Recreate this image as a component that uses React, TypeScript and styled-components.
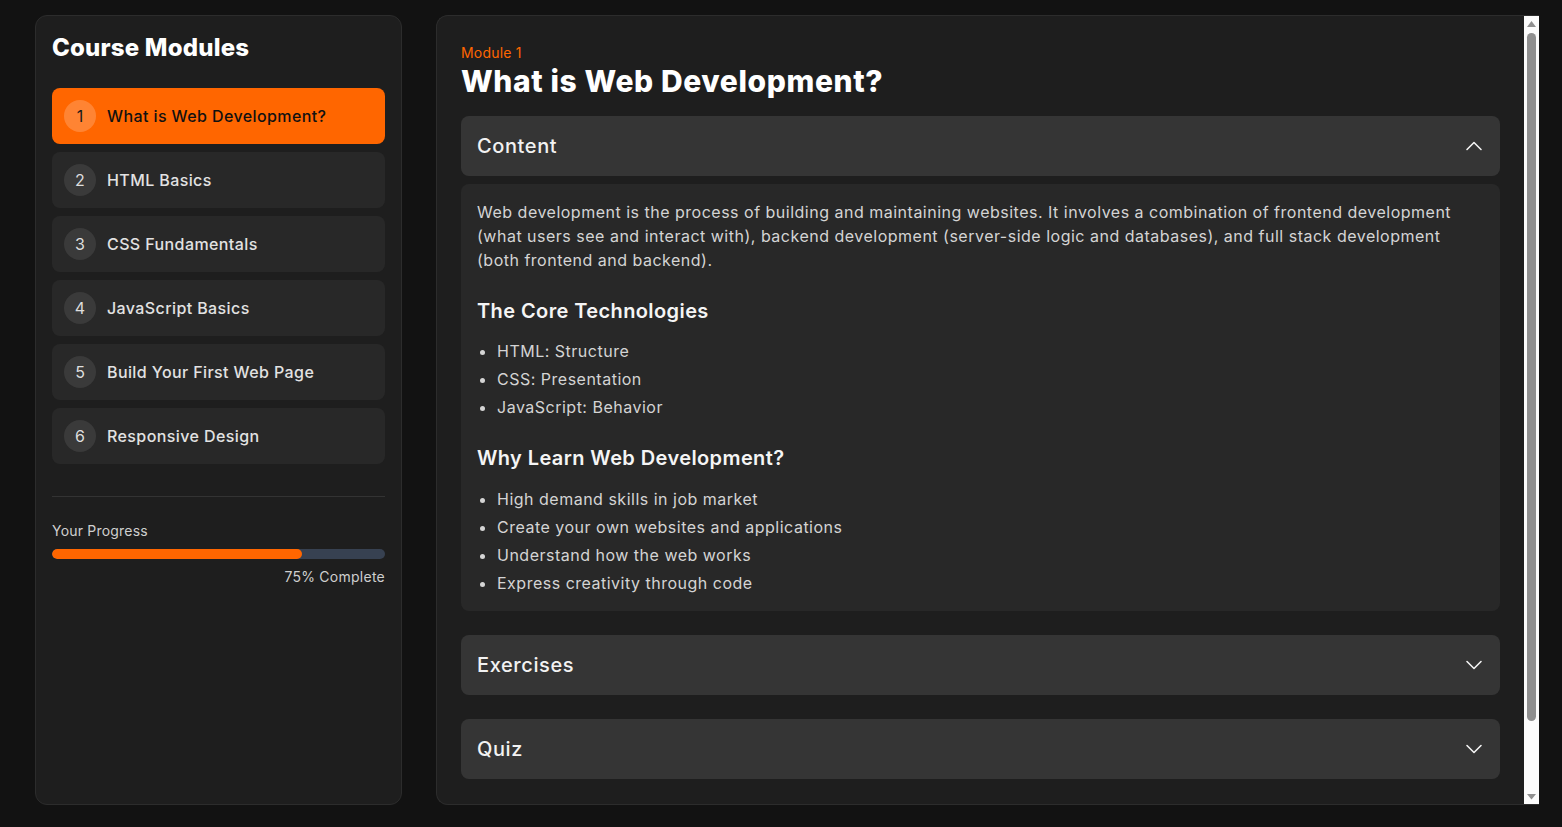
import React, { useState } from 'react'
import styled, { createGlobalStyle } from 'styled-components'

const GlobalStyle = createGlobalStyle`
  * { box-sizing: border-box; }
  html, body {
    margin: 0;
    padding: 0;
    background: #121212;
    font-family: Inter, "Noto Sans", sans-serif;
    color: #e5e5e5;
  }
`

const modules = [
  'What is Web Development?',
  'HTML Basics',
  'CSS Fundamentals',
  'JavaScript Basics',
  'Build Your First Web Page',
  'Responsive Design',
]

const Chevron = ({ up }: { up?: boolean }) => (
  <svg width="24" height="24" viewBox="0 0 24 24" fill="none" stroke="currentColor" strokeWidth="1.6" strokeLinecap="round" strokeLinejoin="round">
    {up ? <path d="M5 15.5l7-7 7 7" /> : <path d="M19 8.5l-7 7-7-7" />}
  </svg>
)

const Arrow = ({ down }: { down?: boolean }) => (
  <svg width="15" height="15" viewBox="0 0 15 15">
    {down ? <polygon points="3,5 12,5 7.5,10.5" fill="#8f8f8f" /> : <polygon points="3,11 12,11 7.5,5" fill="#8f8f8f" />}
  </svg>
)

const App = () => {
  // which accordion sections are open
  const [open, setOpen] = useState<Record<string, boolean>>({ Content: true })
  const toggle = (key: string) => setOpen({ ...open, [key]: !open[key] })
  const [active, setActive] = useState(0)
  const progress = 75

  return (
    <>
      <GlobalStyle />
      <Page>
        <Sidebar>
          <SideTitle>Course Modules</SideTitle>
          <ModuleList>
            {modules.map((m, i) => (
              <ModuleItem key={m} $active={i === active} onClick={() => setActive(i)}>
                <Badge $active={i === active}>{i + 1}</Badge>
                <ModuleName>{m}</ModuleName>
              </ModuleItem>
            ))}
          </ModuleList>
          <ProgressBox>
            <ProgressLabel>Your Progress</ProgressLabel>
            <Track>
              <Fill style={{ width: `${progress}%` }} />
            </Track>
            <ProgressText>{progress}% Complete</ProgressText>
          </ProgressBox>
        </Sidebar>

        <Main>
          <ScrollArea>
            <Eyebrow>Module {active + 1}</Eyebrow>
            <Title>{modules[active]}</Title>

            <Section>
              <Header onClick={() => toggle('Content')}>
                <span>Content</span>
                <Chevron up={open.Content} />
              </Header>
              {open.Content && (
                <Body>
                  <Para>
                    Web development is the process of building and maintaining websites. It involves a combination of frontend development (what users see and interact with), backend development (server-side logic and databases), and full stack development (both frontend and backend).
                  </Para>
                  <SubHead>The Core Technologies</SubHead>
                  <List>
                    <li>HTML: Structure</li>
                    <li>CSS: Presentation</li>
                    <li>JavaScript: Behavior</li>
                  </List>
                  <SubHead>Why Learn Web Development?</SubHead>
                  <List>
                    <li>High demand skills in job market</li>
                    <li>Create your own websites and applications</li>
                    <li>Understand how the web works</li>
                    <li>Express creativity through code</li>
                  </List>
                </Body>
              )}
            </Section>

            <Section>
              <Header onClick={() => toggle('Exercises')}>
                <span>Exercises</span>
                <Chevron up={open.Exercises} />
              </Header>
            </Section>

            <Section>
              <Header onClick={() => toggle('Quiz')}>
                <span>Quiz</span>
                <Chevron up={open.Quiz} />
              </Header>
            </Section>
          </ScrollArea>

          {/* scrollbar rail */}
          <Rail>
            <RailButton><Arrow /></RailButton>
            <RailTrack>
              <Thumb />
            </RailTrack>
            <RailButton><Arrow down /></RailButton>
          </Rail>
        </Main>
      </Page>
    </>
  )
}

export default App

const Page = styled.div`
  height: 100vh;
  display: flex;
  gap: 34px;
  padding: 15px 23px 22px 35px;
`

const Sidebar = styled.aside`
  width: 367px;
  flex-shrink: 0;
  background: #1e1e1e;
  border: 1px solid #2c2c2c;
  border-radius: 12px;
  padding: 16px;
`

const SideTitle = styled.h2`
  margin: 0 0 24px;
  font-size: 24px;
  line-height: 32px;
  font-weight: 800;
  color: #ffffff;
  letter-spacing: 0.2px;
`

const ModuleList = styled.div`
  display: flex;
  flex-direction: column;
  gap: 8px;
`

const ModuleItem = styled.div<{ $active: boolean }>`
  height: 56px;
  display: flex;
  align-items: center;
  gap: 11px;
  padding: 0 12px;
  border-radius: 8px;
  cursor: pointer;
  background: ${(p) => (p.$active ? '#ff6600' : '#282828')};
  color: ${(p) => (p.$active ? '#111111' : '#e2e2e2')};
`

const Badge = styled.div<{ $active: boolean }>`
  width: 32px;
  height: 32px;
  border-radius: 50%;
  display: flex;
  align-items: center;
  justify-content: center;
  font-size: 16px;
  background: ${(p) => (p.$active ? 'rgba(255,255,255,0.2)' : '#3a3a3a')};
  color: ${(p) => (p.$active ? '#1a1a1a' : '#dedede')};
`

const ModuleName = styled.span`
  font-size: 16px;
  font-weight: 500;
  letter-spacing: 0.4px;
`

const ProgressBox = styled.div`
  margin-top: 32px;
  padding-top: 24px;
  border-top: 1px solid #333333;
`

const ProgressLabel = styled.div`
  font-size: 14px;
  line-height: 20px;
  color: #cfcfcf;
  margin-bottom: 8px;
  letter-spacing: 0.2px;
`

const Track = styled.div`
  height: 10px;
  border-radius: 5px;
  background: #374151;
  overflow: hidden;
`

const Fill = styled.div`
  height: 100%;
  background: #ff6600;
  border-radius: 5px;
`

const ProgressText = styled.div`
  margin-top: 8px;
  text-align: right;
  font-size: 14px;
  line-height: 20px;
  color: #cfcfcf;
  letter-spacing: 0.25px;
`

const Main = styled.main`
  flex: 1;
  min-width: 0;
  display: flex;
  background: #1e1e1e;
  border: 1px solid #2c2c2c;
  border-right: none;
  border-radius: 12px 0 0 12px;
  overflow: hidden;
`

const ScrollArea = styled.div`
  flex: 1;
  min-width: 0;
  overflow-y: auto;
  scrollbar-width: none;
  padding: 27px 24px 88px;
  display: flex;
  flex-direction: column;
  gap: 24px;
`

const Rail = styled.div`
  width: 15px;
  flex-shrink: 0;
  display: flex;
  flex-direction: column;
  background: #fbfbfb;
`

const RailButton = styled.div`
  height: 15px;
  flex-shrink: 0;
  display: flex;
`

const RailTrack = styled.div`
  flex: 1;
  padding: 2px 3px 0;
`

const Thumb = styled.div`
  height: 91%;
  border-radius: 5px;
  background: #8f8f8f;
`

const Eyebrow = styled.div`
  font-size: 14px;
  line-height: 20px;
  color: #ff6600;
  letter-spacing: 0.2px;
`

const Title = styled.h1`
  margin: -24px 0 -7px;
  font-size: 30px;
  line-height: 36px;
  font-weight: 800;
  color: #ffffff;
  letter-spacing: 0.6px;
`

const Section = styled.section`
  display: flex;
  flex-direction: column;
  gap: 8px;
  flex-shrink: 0;
`

const Header = styled.div`
  height: 60px;
  display: flex;
  align-items: center;
  justify-content: space-between;
  padding: 0 14px 0 16px;
  border-radius: 8px;
  background: #353535;
  font-size: 20px;
  font-weight: 500;
  color: #f2f2f2;
  letter-spacing: 0.6px;
  cursor: pointer;
`

const Body = styled.div`
  background: #282828;
  border-radius: 8px;
  padding: 16px;
  font-size: 16px;
  line-height: 24px;
  color: #d4d4d4;
  letter-spacing: 0.5px;
`

const Para = styled.p`
  margin: 0;
`

const SubHead = styled.h3`
  margin: 25px 0 14px;
  font-size: 20px;
  line-height: 28px;
  font-weight: 600;
  color: #f5f5f5;
  letter-spacing: 0.4px;
`

const List = styled.ul`
  margin: 0;
  padding-left: 20px;
  li + li {
    margin-top: 4px;
  }
  & + h3 {
    margin: 25px 0 15px;
  }
`
